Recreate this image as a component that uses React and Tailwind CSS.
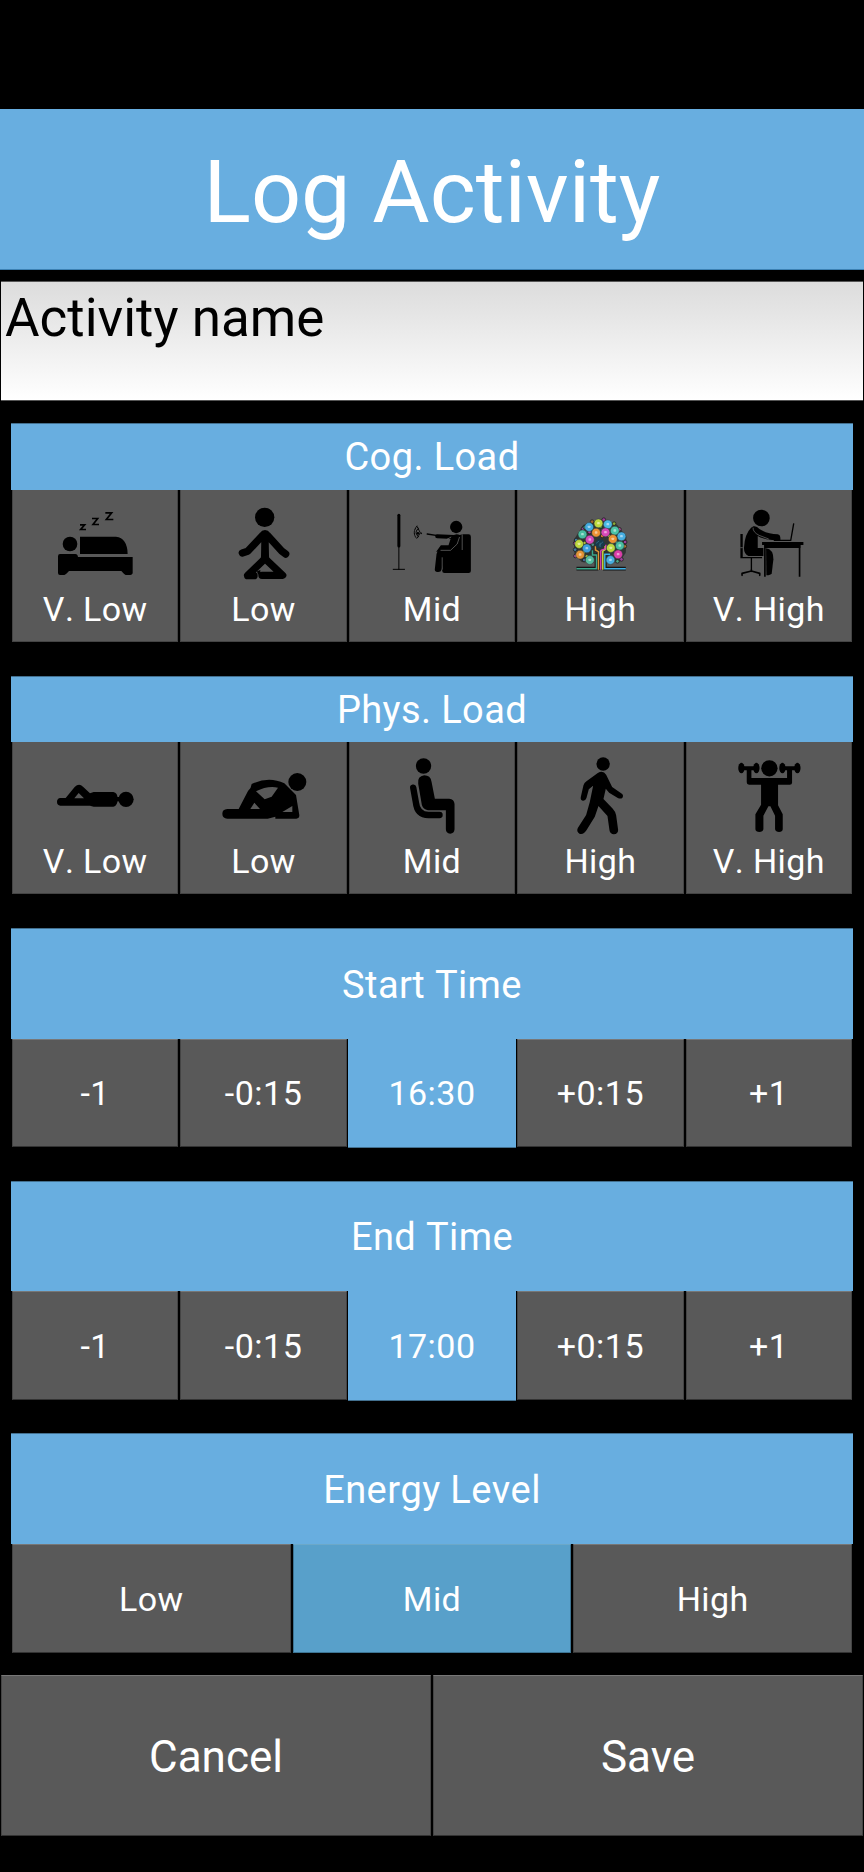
import React from "react";

const line = { fill: "none", stroke: "#000", strokeLinecap: "round", strokeLinejoin: "round" };

function Icon({ viewBox, children }) {
  return (
    <svg viewBox={viewBox} className="block h-[100px] w-[168px] shrink-0" preserveAspectRatio="xMidYMid meet">
      {children}
    </svg>
  );
}

function BedIcon() {
  return (
    <Icon viewBox="33 30 504 300">
      <circle cx="210" cy="192" r="22" />
      <path d="M240 170H348Q382 174 383 222H240Z" />
      <path d="M180 222H226Q233 222 234 231H398V280Q396 286 389 285H377Q373 284 364 273H207Q198 284 193 285H180Q174 285 174 279V229Q174 222 180 222Z" />
      <path fill="none" stroke="#000" strokeWidth="5" d="M240 134.500H254L242 148.500H258M276 115.500H293L279 133.500H297M316 98.500H335L319 118.500H340" />
    </Icon>
  );
}

function MeditateIcon() {
  return (
    <Icon viewBox="538 30 504 300">
      <circle cx="792" cy="112" r="29" />
      <path {...line} strokeWidth="22" d="M725 219L741 214L786 166Q793 156 800 166L843 213L855 222M793 165V235M741 286L793 236L846 286H784M741 287H760" />
      <path d="M785 160H801L806 245H780Z" />
      <path d="M769 274L779 270V280L772 284Z" />
    </Icon>
  );
}

function TvIcon() {
  return (
    <Icon viewBox="23.4 30 504 300">
      <path {...line} strokeWidth="9" d="M176 106V198" />
      <path {...line} strokeWidth="3" d="M176 200V268M159 268H193" />
      <g {...line} strokeWidth="3" strokeDasharray="5 3">
        <path d="M230 138Q215 158 229 175M235 145Q220 158 236 171" />
        <path d="M231 140L240 158L232 173" />
      </g>
      <circle cx="233" cy="160" r="4" />
      <circle cx="243" cy="160" r="2.5" />
      <path {...line} strokeWidth="4" d="M261 162L292 167" />
      <circle cx="348" cy="141" r="18.5" />
      <path {...line} strokeWidth="12" d="M291 169L340 171" />
      <path d="M366 163H385Q392 163 392 170V273Q392 279 385 279H313Q306 279 306 272V215H288L302 196H325L333 171Q345 158 359 165Z" />
      <path d="M303 209H331V236H314L304 269Q302 277 292 276Q282 275 284 266L289 222Q292 209 303 209Z" />
      <path fill="none" stroke="#777" strokeWidth="2" d="M301 211H331L351 192L358 171M366 163V210M333 171L320 178M306 232V269" />
    </Icon>
  );
}

const orbs = [
  [144, 70, "#bed83e"], [172, 73, "#4ab9e5"], [116, 81, "#43abe0"], [96, 103, "#48bea1"],
  [137, 98, "#ee9233"], [165, 97, "#d847b7"], [193, 92, "#4bc3a8"], [213, 109, "#47aee0"],
  [118, 119, "#d44ab9"], [187, 117, "#ee9233"], [86, 132, "#bed83e"], [208, 137, "#48bea1"],
  [109, 145, "#3d9fde"], [181, 144, "#bed83e"], [89, 164, "#e39336"], [203, 163, "#dc3da9"],
  [118, 180, "#54bda1"], [180, 180, "#48afe1"],
];
const specks = [
  [160, 59, "#a43a9e"], [125, 65, "#a2662d"], [191, 71, "#8eaa37"], [98, 86, "#9a439c"],
  [103, 82, "#3a8e76"], [151, 80, "#4c8a58"], [207, 88, "#a34a91"], [155, 108, "#c9742d"],
  [74, 130, "#a343a0"], [77, 120, "#417ca3"], [74, 149, "#417ca3"], [102, 129, "#b1bd3c"],
  [224, 126, "#9e3d98"], [223, 139, "#b6762e"], [100, 158, "#8ba43a"], [75, 168, "#a44d9d"],
  [109, 169, "#a1b93c"], [201, 184, "#4da486"], [198, 127, "#4a9587"], [213, 178, "#9c429c"],
  [127, 134, "#4b8d80"], [176, 108, "#8ba13f"], [117, 96, "#b53f9e"], [101, 180, "#456892"],
];
const traces = [
  ["#3ba78b", "M78 206H138V165H126V151"], ["#dc9236", "M144 209V155L135 150V139"],
  ["#d640b3", "M151 209V151"], ["#c6d83f", "M157 209V153L164 149V138"],
  ["#3fb1e5", "M226 206H163V163H179"],
];

function KnowledgeTreeIcon() {
  return (
    <Icon viewBox="528.6 30 504 300">
      <g transform="translate(632 60)">
        <g fill="none" stroke="#151515" strokeWidth="11">
          {traces.map(([c, d]) => <path key={c} d={d} />)}
        </g>
        <path fill="#2a302e" d="M98 75L148 57L200 74L228 110L226 158L207 186L170 189L164 160H136L130 188L94 186L72 163L70 120Z" opacity="0.85" />
        {specks.map(([x, y, c]) => (
          <circle key={`${x}-${y}`} cx={x} cy={y} r="5.5" fill={c} stroke="#222" strokeWidth="2.5" />
        ))}
        <g fill="none" strokeWidth="4.5">
          {traces.map(([c, d]) => <path key={c} d={d} stroke={c} />)}
        </g>
        <path fill="none" stroke="#d640b3" strokeWidth="4" d="M151 151L166 146V134" />
        <path fill="#173b4c" d="M132 131L143 118L157 119L164 132L153 145L140 143Z" />
        <path fill="none" stroke="#3d7993" strokeWidth="2" d="M137 130L146 123M145 137L158 125M149 141V128" />
        {orbs.map(([x, y, c]) => (
          <g key={`${x}-${y}`}>
            <circle cx={x} cy={y} r="13.2" fill={c} stroke="#30413e" strokeWidth="1.5" />
            <rect x={x - 4} y={y - 4} width="8" height="7" rx="2" fill="#fff" opacity="0.5" />
          </g>
        ))}
      </g>
    </Icon>
  );
}

function DeskIcon() {
  return (
    <Icon viewBox="13.8 30 504 300">
      <circle cx="243" cy="114" r="25" />
      <path d="M219 139Q229 137 237 147Q262 163 292 163Q301 164 300 180H275Q246 177 232 168V204H249V228H204Q189 220 191 201Q193 162 212 143Z" />
      <path d="M257 205Q279 208 279 238L274 280Q271 286 258 286Z" />
      <path d="M245 186H369V195H360V290H355V204H256V290H251V195H245Z" />
      <path d="M256 194H360V204H256Z" />
      <path d="M180 162H187V231H245V235H180Z" />
      <path fill="none" stroke="#000" strokeWidth="4" d="M280 181H331L340 130M213 234V271" />
      <path {...line} strokeWidth="5" d="M185 286V280L213 273L238 280V286M213 270V274" />
      <path fill="none" stroke="#999" strokeWidth="1.5" d="M218 143Q217 156 236 166L265 177M180 203H187" />
    </Icon>
  );
}

function LyingIcon() {
  return (
    <Icon viewBox="33 36 504 300">
      <circle cx="378" cy="208" r="23" />
      <path d="M181 204H197L224 171Q237 158 249 170L270 190L281 186H340Q353 188 353 207Q353 228 340 230H281L270 227H181Q171 226 171 216Q171 205 181 204ZM223 205H252L236 189Z" fillRule="evenodd" />
      <path d="M350 201H360V214H350Z" />
    </Icon>
  );
}

function RecliningIcon() {
  return (
    <Icon viewBox="538 36 504 300">
      <circle cx="890" cy="156" r="27" />
      <path fillRule="evenodd" d="M753 162Q805 137 851 160L886 195L896 256Q896 266 887 266H824V260L801 266H680Q665 265 665 251Q665 238 680 237H714L742 183Q752 174 753 162ZM766 184L792 208L813 200L832 173Q801 166 766 184ZM749 237H778L761 218ZM845 246H875V228Z" />
    </Icon>
  );
}

function SittingIcon() {
  return (
    <Icon viewBox="23.4 36 504 300">
      <circle cx="250" cy="108" r="23" />
      <path d="M234 161Q231 139 252 136Q271 136 274 155L284 206H327Q342 207 343 222V298Q342 311 330 311Q317 310 317 298V241H263Q249 238 245 225Z" />
      <path {...line} strokeWidth="19" d="M219 173L227 217Q231 255 265 255H298" />
    </Icon>
  );
}

function WalkingIcon() {
  return (
    <Icon viewBox="528.6 36 504 300">
      <circle cx="790" cy="102" r="20" />
      <path d="M774 129Q790 120 799 134L817 171L843 189Q853 194 848 203Q843 208 834 204L808 188L798 176L791 207L819 236Q826 243 829 256L835 300Q835 312 822 313Q811 312 809 301L803 258L776 228L765 260L740 301Q731 315 719 311Q709 305 714 294L739 255L750 216L760 167L747 178L740 204Q737 213 729 212Q721 210 723 201L731 166Q733 159 740 154Z" />
    </Icon>
  );
}

function WeightsIcon() {
  return (
    <Icon viewBox="13.8 36 504 300">
      <circle cx="267" cy="115" r="24.5" />
      <path d="M199 119H213V144H320V119H335V158Q335 164 328 164H293V226L307 253V298Q306 306 296 306Q286 306 284 298V257L270 229H264L249 257V298Q247 306 237 306Q226 306 225 298V253L242 224V164H206Q199 164 199 157Z" />
      <path d="M182 109H230V121H182ZM305 109H352V121H305Z" />
      <ellipse cx="183" cy="114" rx="9.500" ry="16" />
      <ellipse cx="228" cy="114" rx="9.500" ry="16" />
      <ellipse cx="306" cy="114" rx="9.500" ry="16" />
      <ellipse cx="351" cy="114" rx="9.500" ry="16" />
    </Icon>
  );
}

function GroupTitle({ tall, children }) {
  return (
    <h2 className={`flex items-center justify-center border-t border-[#43708f] bg-[#68aee0] text-[38px] leading-none tracking-[0.4px] [font-kerning:none] ${tall}`}>
      {children}
    </h2>
  );
}

function LoadGroup({ title, titleClass, options }) {
  return (
    <section>
      <GroupTitle tall={titleClass}>{title}</GroupTitle>
      <div className="grid h-[152px] grid-cols-5">
        {options.map(([label, Glyph]) => (
          <button key={label} className="mx-px flex flex-col items-center border-x border-b border-[#444] bg-[#595959]">
            <Glyph />
            <span className="text-[34px] leading-[38px] tracking-[0.4px] [font-kerning:none]">{label}</span>
          </button>
        ))}
      </div>
    </section>
  );
}

function TimeGroup({ title, titleClass, rowClass, time }) {
  const cell = "mx-px flex items-center justify-center border-x border-b border-t border-b-[#333] border-t-[#777] border-x-[#444] bg-[#595959]";
  return (
    <section>
      <GroupTitle tall={titleClass}>{title}</GroupTitle>
      <div className={`grid grid-cols-5 text-[34px] leading-none tracking-[0.5px] ${rowClass}`}>
        <button className={cell}>-1</button>
        <button className={cell}>-0:15</button>
        <div className="-mb-px flex items-center justify-center border-b border-[#43708f] bg-[#68aee0]">{time}</div>
        <button className={cell}>+0:15</button>
        <button className={cell}>+1</button>
      </div>
    </section>
  );
}

export default function App() {
  const level = "mx-px flex items-center justify-center border border-b-[#333] border-t-[#777] border-x-[#444] bg-[#595959]";
  const action = "flex items-center justify-center border border-b-[#333] border-t-[#777] border-x-[#444] bg-[#595959] pt-[3px]";
  return (
    <main className="flex h-[1872px] w-[864px] flex-col overflow-hidden bg-black pt-[109px] font-['Roboto',sans-serif] text-white">
      <h1 className="flex h-[161px] items-center justify-center border-b border-[#3c81b3] bg-[#68aee0] pt-[5px] text-[88px] leading-none">
        Log Activity
      </h1>
      <div className="mx-px mt-[11px] h-[120px] border-y border-[#555] bg-linear-to-b from-[#dcdcdc] to-white pl-1 pt-[5px] text-[53px] leading-[62px] text-black">
        Activity name
      </div>
      <div className="mx-[11px] mt-[22px] flex flex-col">
        <LoadGroup
          title="Cog. Load"
          titleClass="h-[67px]"
          options={[["V. Low", BedIcon], ["Low", MeditateIcon], ["Mid", TvIcon], ["High", KnowledgeTreeIcon], ["V. High", DeskIcon]]}
        />
        <div className="h-[34px]" />
        <LoadGroup
          title="Phys. Load"
          titleClass="h-[66px]"
          options={[["V. Low", LyingIcon], ["Low", RecliningIcon], ["Mid", SittingIcon], ["High", WalkingIcon], ["V. High", WeightsIcon]]}
        />
        <div className="h-[34px]" />
        <TimeGroup title="Start Time" titleClass="h-[111px] pt-[2px]" rowClass="h-[108px]" time="16:30" />
        <div className="h-[34px]" />
        <TimeGroup title="End Time" titleClass="h-[110px] pt-px" rowClass="h-[109px]" time="17:00" />
        <div className="h-[33px]" />
        <section>
          <GroupTitle tall="h-[111px] pt-[2px]">Energy Level</GroupTitle>
          <div className="grid h-[109px] grid-cols-3 text-[34px] leading-none tracking-[0.4px]">
            <button className={level}>Low</button>
            <button className="mx-px flex items-center justify-center border border-[#3d7493] border-t-[#6ca8c8] bg-[#58a0ca]">Mid</button>
            <button className={level}>High</button>
          </div>
        </section>
      </div>
      <div className="mx-px mt-[22px] grid h-[161px] grid-cols-2 gap-[2px] text-[44px] leading-none">
        <button className={action}>Cancel</button>
        <button className={action}>Save</button>
      </div>
    </main>
  );
}
